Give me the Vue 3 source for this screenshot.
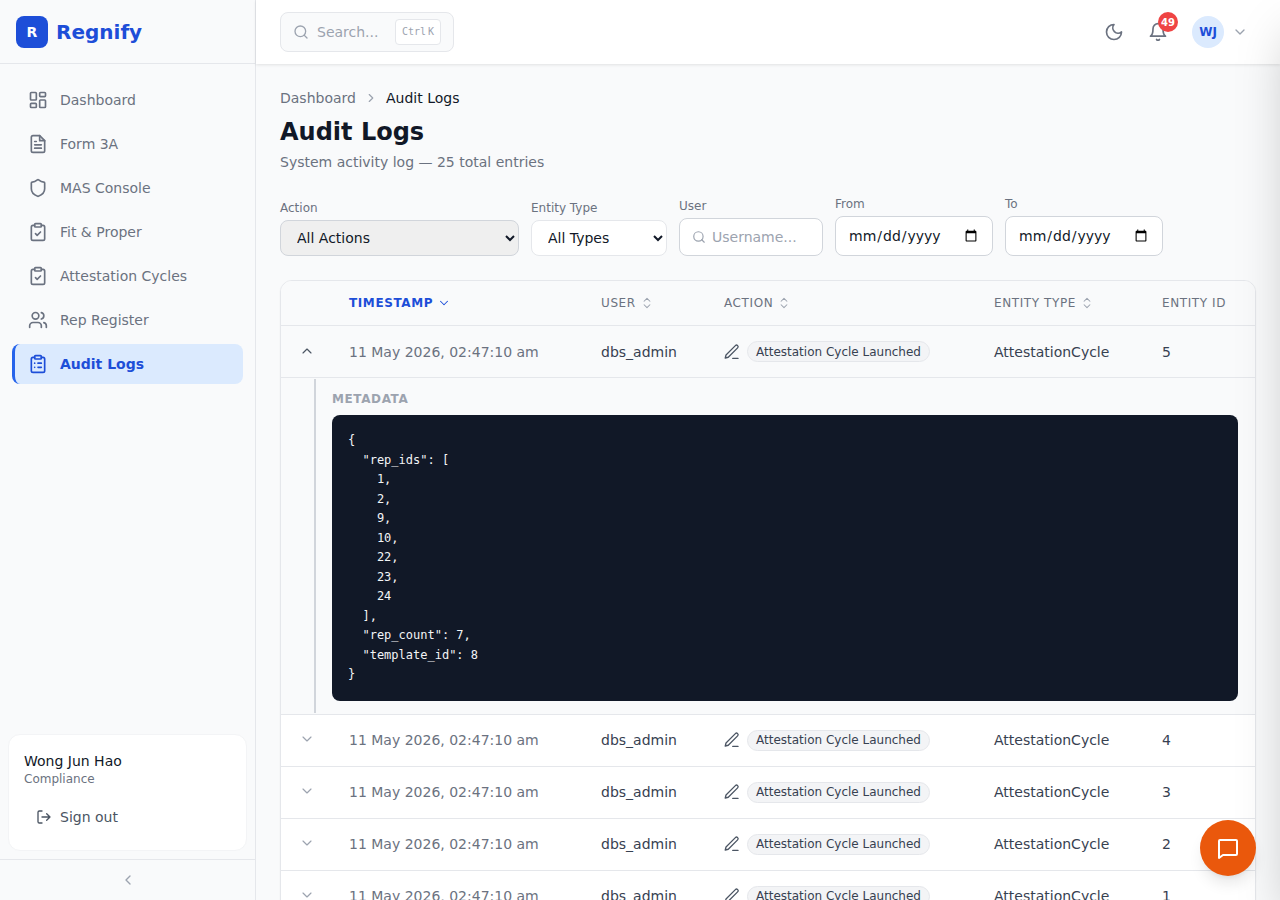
<template>
  <div class="app">
    <aside class="sidebar">
      <div class="brand">
        <span class="brand-mark">R</span>
        <span class="brand-name">Regnify</span>
      </div>
      <nav class="nav">
        <a v-for="item in navItems" :key="item.label" class="nav-item" :class="{ active: item.active }">
          <svg viewBox="0 0 24 24" class="nav-icon" v-html="item.icon"></svg>
          <span>{{ item.label }}</span>
        </a>
      </nav>
      <div class="user-card">
        <div class="user-name">Wong Jun Hao</div>
        <div class="user-role">Compliance</div>
        <a class="sign-out">
          <svg viewBox="0 0 24 24" class="signout-icon">
            <path d="M9 21H5a2 2 0 0 1-2-2V5a2 2 0 0 1 2-2h4" />
            <path d="M16 17l5-5-5-5M21 12H9" />
          </svg>
          <span>Sign out</span>
        </a>
      </div>
      <div class="collapse">
        <svg viewBox="0 0 24 24" class="collapse-icon"><path d="M15 6l-6 6 6 6" /></svg>
      </div>
    </aside>

    <div class="main">
      <header class="topbar">
        <div class="search">
          <svg viewBox="0 0 24 24" class="search-icon"><circle cx="11" cy="11" r="8" /><path d="M21 21l-4.3-4.3" /></svg>
          <span class="search-text">Search...</span>
          <kbd class="kbd">Ctrl K</kbd>
        </div>
        <div class="top-actions">
          <svg viewBox="0 0 24 24" class="moon"><path d="M12 3a6.400 6.400 0 0 0 9 9 9 9 0 1 1-9-9z" /></svg>
          <div class="bell-wrap">
            <svg viewBox="0 0 24 24" class="bell">
              <path d="M6 8a6 6 0 0 1 12 0c0 7 3 9 3 9H3s3-2 3-9" />
              <path d="M10.300 21a2 2 0 0 0 3.400 0" />
            </svg>
            <span class="badge">49</span>
          </div>
          <div class="avatar-wrap">
            <span class="avatar">WJ</span>
            <svg viewBox="0 0 24 24" class="avatar-chev"><path d="M6 9l6 6 6-6" /></svg>
          </div>
        </div>
      </header>

      <main class="content">
        <div class="crumbs">
          <span class="crumb-link">Dashboard</span>
          <svg viewBox="0 0 24 24" class="crumb-sep"><path d="M9 6l6 6-6 6" /></svg>
          <span class="crumb-current">Audit Logs</span>
        </div>
        <h1 class="title">Audit Logs</h1>
        <p class="subtitle">System activity log — 25 total entries</p>

        <div class="filters">
          <label class="field">
            <span class="field-label">Action</span>
            <select class="select select-action">
              <option>All Actions</option>
            </select>
          </label>
          <label class="field">
            <span class="field-label">Entity Type</span>
            <select class="select select-type">
              <option>All Types</option>
            </select>
          </label>
          <label class="field">
            <span class="field-label">User</span>
            <span class="user-input">
              <svg viewBox="0 0 24 24" class="user-input-icon"><circle cx="11" cy="11" r="8" /><path d="M21 21l-4.3-4.3" /></svg>
              <input type="text" placeholder="Username..." />
            </span>
          </label>
          <label class="field">
            <span class="field-label">From</span>
            <input type="date" class="date" />
          </label>
          <label class="field">
            <span class="field-label">To</span>
            <input type="date" class="date" />
          </label>
        </div>

        <div class="table-card">
          <div class="row head">
            <div></div>
            <div class="th sorted">TIMESTAMP
              <svg viewBox="0 0 24 24" class="sort-icon"><path d="M6 9l6 6 6-6" /></svg>
            </div>
            <div class="th">USER
              <svg viewBox="0 0 24 24" class="sort-icon"><path d="M7 9l5-5 5 5M7 15l5 5 5-5" /></svg>
            </div>
            <div class="th">ACTION
              <svg viewBox="0 0 24 24" class="sort-icon"><path d="M7 9l5-5 5 5M7 15l5 5 5-5" /></svg>
            </div>
            <div class="th">ENTITY TYPE
              <svg viewBox="0 0 24 24" class="sort-icon"><path d="M7 9l5-5 5 5M7 15l5 5 5-5" /></svg>
            </div>
            <div class="th">ENTITY ID</div>
          </div>

          <template v-for="log in logs" :key="log.id">
            <div class="row body" :class="{ open: log.open }">
              <div class="toggle">
                <svg viewBox="0 0 24 24" class="toggle-icon">
                  <path :d="log.open ? 'M6 15l6-6 6 6' : 'M6 9l6 6 6-6'" />
                </svg>
              </div>
              <div class="stamp">11 May 2026, 02:47:10 am</div>
              <div class="cell">dbs_admin</div>
              <div class="action">
                <svg viewBox="0 0 24 24" class="pen">
                  <path d="M16.500 3.500a2.120 2.120 0 0 1 3 3L7 19l-4 1 1-4z" />
                  <path d="M13 20.500h7" />
                </svg>
                <span class="pill">Attestation Cycle Launched</span>
              </div>
              <div class="cell">AttestationCycle</div>
              <div class="cell">{{ log.id }}</div>
            </div>
            <div v-if="log.open" class="detail">
              <div class="detail-inner">
                <div class="meta-label">METADATA</div>
                <pre class="code">{{ metadata }}</pre>
              </div>
            </div>
          </template>
        </div>
      </main>
    </div>

    <!-- closed chat drawer, only its shadow shows at the right edge -->
    <div class="chat-drawer"></div>

    <button class="chat">
      <svg viewBox="0 0 24 24" class="chat-icon"><path d="M3 5a1 1 0 0 1 1-1h16a1 1 0 0 1 1 1v13a1 1 0 0 1-1 1H7l-4 3z" /></svg>
    </button>
  </div>
</template>

<script setup>
const navItems = [
  { label: 'Dashboard', icon: '<rect x="3" y="3" width="7" height="9" rx="1"/><rect x="14" y="3" width="7" height="5" rx="1"/><rect x="14" y="12" width="7" height="9" rx="1"/><rect x="3" y="16" width="7" height="5" rx="1"/>' },
  { label: 'Form 3A', icon: '<path d="M14 2H6a2 2 0 0 0-2 2v16a2 2 0 0 0 2 2h12a2 2 0 0 0 2-2V8z"/><path d="M14 2v6h6M8 13h8M8 17h8M8 9h2"/>' },
  { label: 'MAS Console', icon: '<path d="M20 13c0 5-3.500 7.500-7.660 8.950a1 1 0 0 1-.67-.01C7.500 20.500 4 18 4 13V6a1 1 0 0 1 1-1c2 0 4.500-1.200 6.240-2.720a1.170 1.170 0 0 1 1.520 0C14.510 3.810 17 5 19 5a1 1 0 0 1 1 1z"/>' },
  { label: 'Fit & Proper', icon: '<rect x="8" y="2" width="8" height="4" rx="1"/><path d="M16 4h2a2 2 0 0 1 2 2v14a2 2 0 0 1-2 2H6a2 2 0 0 1-2-2V6a2 2 0 0 1 2-2h2"/><path d="M9 14l2 2 4-4"/>' },
  { label: 'Attestation Cycles', icon: '<rect x="8" y="2" width="8" height="4" rx="1"/><path d="M16 4h2a2 2 0 0 1 2 2v14a2 2 0 0 1-2 2H6a2 2 0 0 1-2-2V6a2 2 0 0 1 2-2h2"/><path d="M9 14l2 2 4-4"/>' },
  { label: 'Rep Register', icon: '<path d="M16 21v-2a4 4 0 0 0-4-4H6a4 4 0 0 0-4 4v2"/><circle cx="9" cy="7" r="4"/><path d="M22 21v-2a4 4 0 0 0-3-3.870M16 3.130a4 4 0 0 1 0 7.750"/>' },
  { label: 'Audit Logs', active: true, icon: '<rect x="8" y="2" width="8" height="4" rx="1"/><path d="M16 4h2a2 2 0 0 1 2 2v14a2 2 0 0 1-2 2H6a2 2 0 0 1-2-2V6a2 2 0 0 1 2-2h2"/><path d="M12 11h4M12 16h4M8 11h.01M8 16h.01"/>' }
]

const logs = [
  { id: 5, open: true },
  { id: 4 },
  { id: 3 },
  { id: 2 },
  { id: 1 }
]

const metadata = JSON.stringify({
  rep_ids: [1, 2, 9, 10, 22, 23, 24],
  rep_count: 7,
  template_id: 8
}, null, 2)
</script>

<style>
html, body {
  margin: 0;
  height: 100%;
  overflow: hidden;
}
</style>

<style scoped>
.app {
  display: flex;
  height: 100vh;
  overflow: hidden;
  background: #f9fafb;
  font-family: "DejaVu Sans", sans-serif;
  color: #111827;
}

svg {
  fill: none;
  stroke: currentColor;
  stroke-width: 2;
  stroke-linecap: round;
  stroke-linejoin: round;
  flex-shrink: 0;
}

.sidebar {
  width: 255px;
  flex-shrink: 0;
  display: flex;
  flex-direction: column;
  background: #f9fafb;
  border-right: 1px solid #e5e7eb;
}

.brand {
  height: 63px;
  display: flex;
  align-items: center;
  gap: 8px;
  padding: 0 16px;
  border-bottom: 1px solid #e5e7eb;
}

.brand-mark {
  width: 32px;
  height: 32px;
  border-radius: 8px;
  background: #1d4ed8;
  color: #fff;
  font-size: 14px;
  font-weight: 700;
  display: flex;
  align-items: center;
  justify-content: center;
}

.brand-name {
  font-size: 20px;
  font-weight: 700;
  color: #1d4ed8;
}

.nav {
  flex: 1;
  display: flex;
  flex-direction: column;
  gap: 4px;
  padding: 16px 12px;
}

.nav-item {
  height: 40px;
  display: flex;
  align-items: center;
  gap: 12px;
  padding: 0 16px;
  border-radius: 8px;
  font-size: 14px;
  color: #6b7280;
}

.nav-icon {
  width: 20px;
  height: 20px;
}

.nav-item.active {
  background: #dbeafe;
  color: #1d4ed8;
  font-weight: 700;
  border-left: 3px solid #2563eb;
  padding-left: 13px;
}

.user-card {
  margin: 0 8px 8px;
  padding: 16px 15px 17px;
  background: #fff;
  border: 1px solid #f3f4f6;
  border-radius: 12px;
}

.user-name {
  font-size: 14px;
  line-height: 20px;
}

.user-role {
  font-size: 12px;
  line-height: 16px;
  color: #6b7280;
}

.sign-out {
  display: flex;
  align-items: center;
  gap: 8px;
  margin-top: 14px;
  padding: 6px 12px;
  font-size: 14px;
  line-height: 20px;
  color: #4b5563;
}

.signout-icon {
  width: 16px;
  height: 16px;
}

.collapse {
  height: 40px;
  display: flex;
  align-items: center;
  justify-content: center;
  border-top: 1px solid #e5e7eb;
  color: #9ca3af;
}

.collapse-icon {
  width: 16px;
  height: 16px;
}

.main {
  flex: 1;
  min-width: 0;
  display: flex;
  flex-direction: column;
}

.topbar {
  height: 64px;
  flex-shrink: 0;
  display: flex;
  align-items: center;
  justify-content: space-between;
  padding: 0 32px 0 24px;
  box-sizing: border-box;
  background: #fff;
  box-shadow: 0 1px 3px rgba(0, 0, 0, 0.1);
  position: relative;
  z-index: 2;
}

.search {
  width: 174px;
  height: 40px;
  box-sizing: border-box;
  display: flex;
  align-items: center;
  padding: 0 12px;
  background: #f9fafb;
  border: 1px solid #e5e7eb;
  border-radius: 8px;
}

.search-icon {
  width: 16px;
  height: 16px;
  color: #9ca3af;
}

.search-text {
  margin-left: 8px;
  font-size: 14px;
  color: #9ca3af;
}

.kbd {
  margin-left: auto;
  padding: 6px;
  background: #fff;
  border: 1px solid #e5e7eb;
  border-radius: 4px;
  font-family: "DejaVu Sans Mono", monospace;
  font-size: 10px;
  line-height: 12px;
  word-spacing: -4px;
  color: #9ca3af;
}

.top-actions {
  display: flex;
  align-items: center;
}

.moon {
  width: 20px;
  height: 20px;
  color: #6b7280;
}

.bell-wrap {
  position: relative;
  margin-left: 24px;
  display: flex;
}

.bell {
  width: 20px;
  height: 20px;
  color: #6b7280;
}

.badge {
  position: absolute;
  top: -10px;
  right: -10px;
  width: 20px;
  height: 20px;
  border-radius: 50%;
  background: #ef4444;
  color: #fff;
  font-size: 10px;
  font-weight: 700;
  display: flex;
  align-items: center;
  justify-content: center;
}

.avatar-wrap {
  display: flex;
  align-items: center;
  margin-left: 24px;
  gap: 8px;
}

.avatar {
  width: 32px;
  height: 32px;
  border-radius: 50%;
  background: #dbeafe;
  color: #1d4ed8;
  font-size: 12px;
  font-weight: 700;
  display: flex;
  align-items: center;
  justify-content: center;
}

.avatar-chev {
  width: 16px;
  height: 16px;
  color: #9ca3af;
}

.content {
  flex: 1;
  min-height: 0;
  overflow: hidden;
  padding: 24px 24px 0;
}

.crumbs {
  display: flex;
  align-items: center;
  gap: 8px;
  font-size: 14px;
  line-height: 20px;
}

.crumb-link {
  color: #6b7280;
}

.crumb-sep {
  width: 14px;
  height: 14px;
  color: #9ca3af;
}

.title {
  margin: 8px 0 0;
  font-size: 24px;
  line-height: 32px;
  font-weight: 700;
}

.subtitle {
  margin: 4px 0 0;
  font-size: 14px;
  line-height: 20px;
  color: #6b7280;
}

.filters {
  display: flex;
  align-items: flex-end;
  gap: 12px;
  margin-top: 24px;
}

.field {
  display: flex;
  flex-direction: column;
  gap: 4px;
}

.field-label {
  font-size: 12px;
  line-height: 16px;
  color: #6b7280;
}

.select {
  height: 36px;
  font-family: inherit;
  font-size: 14px;
  color: #111827;
  padding: 0 12px;
  border: 1px solid #e5e7eb;
  border-radius: 8px;
  background: #fff;
}

.select-action {
  width: 239px;
  background: #efefef;
  border-color: #d1d5db;
}

.select-type {
  width: 136px;
}

.user-input {
  width: 144px;
  height: 38px;
  box-sizing: border-box;
  display: flex;
  align-items: center;
  gap: 6px;
  padding: 0 12px;
  background: #fff;
  border: 1px solid #d1d5db;
  border-radius: 8px;
}

.user-input-icon {
  width: 14px;
  height: 14px;
  color: #9ca3af;
}

.user-input input {
  width: 100%;
  min-width: 0;
  border: 0;
  outline: 0;
  padding: 0;
  font-family: inherit;
  font-size: 14px;
  background: transparent;
}

.user-input input::placeholder {
  color: #9ca3af;
}

.date {
  width: 158px;
  height: 40px;
  box-sizing: border-box;
  padding: 0 12px;
  font-family: inherit;
  font-size: 14px;
  color: #111827;
  background: #fff;
  border: 1px solid #d1d5db;
  border-radius: 8px;
}

.table-card {
  margin-top: 24px;
  background: #fff;
  border: 1px solid #e5e7eb;
  border-radius: 12px;
  overflow: hidden;
  box-shadow: 0 1px 2px rgba(0, 0, 0, 0.05);
}

.row {
  display: grid;
  grid-template-columns: 68px 252px 123px 270px 168px 1fr;
  align-items: center;
}

.head {
  height: 44px;
  background: #f9fafb;
  border-bottom: 1px solid #e5e7eb;
}

.th {
  display: flex;
  align-items: center;
  gap: 4px;
  font-size: 12px;
  font-weight: 500;
  letter-spacing: 0.6px;
  color: #6b7280;
}

.th.sorted {
  color: #1d4ed8;
  font-weight: 700;
}

.sort-icon {
  width: 14px;
  height: 14px;
  color: #9ca3af;
  stroke-width: 1.75;
}

.sorted .sort-icon {
  color: #1d4ed8;
}

.body {
  height: 51px;
  border-bottom: 1px solid #e5e7eb;
  font-size: 14px;
}

.body.open {
  background: #f9fafb;
}

.toggle {
  display: flex;
  justify-content: center;
  padding: 0 16px 2px 0;
  color: #9ca3af;
}

.open .toggle {
  color: #4b5563;
}

.toggle-icon {
  width: 16px;
  height: 16px;
  stroke-width: 1.75;
}

.stamp {
  color: #6b7280;
}

.cell {
  color: #374151;
}

.action {
  display: flex;
  align-items: center;
  gap: 6px;
  margin-left: -1px;
}

.pen {
  width: 18px;
  height: 18px;
  color: #4b5563;
  stroke-width: 1.75;
}

.pill {
  padding: 0 8px;
  height: 19px;
  display: flex;
  align-items: center;
  background: #f3f4f6;
  border: 1px solid #e5e7eb;
  border-radius: 999px;
  font-size: 12px;
  color: #374151;
}

.detail {
  padding: 1px 17px 1px 33px;
  background: #f9fafb;
  border-bottom: 1px solid #e5e7eb;
}

.detail-inner {
  padding: 12px 0 12px 16px;
  border-left: 2px solid #d1d5db;
}

.meta-label {
  font-size: 12px;
  line-height: 16px;
  font-weight: 700;
  letter-spacing: 0.6px;
  color: #9ca3af;
}

.code {
  margin: 8px 0 0;
  padding: 16px;
  background: #111827;
  color: #f3f4f6;
  border-radius: 8px;
  font-family: "DejaVu Sans Mono", monospace;
  font-size: 12px;
  line-height: 19.5px;
}

.chat-drawer {
  position: fixed;
  top: 0;
  left: 100%;
  width: 400px;
  height: 100%;
  background: #fff;
  box-shadow: 0 25px 50px -12px rgba(0, 0, 0, 0.25);
  pointer-events: none;
  z-index: 5;
}

.chat {
  position: fixed;
  right: 24px;
  bottom: 24px;
  width: 56px;
  height: 56px;
  border: 0;
  padding: 0;
  border-radius: 50%;
  background: #ea580c;
  color: #fff;
  display: flex;
  align-items: center;
  justify-content: center;
  box-shadow: 0 10px 15px -3px rgba(0, 0, 0, 0.1), 0 4px 6px -4px rgba(0, 0, 0, 0.1);
  z-index: 6;
}

.chat-icon {
  width: 24px;
  height: 24px;
}
</style>
